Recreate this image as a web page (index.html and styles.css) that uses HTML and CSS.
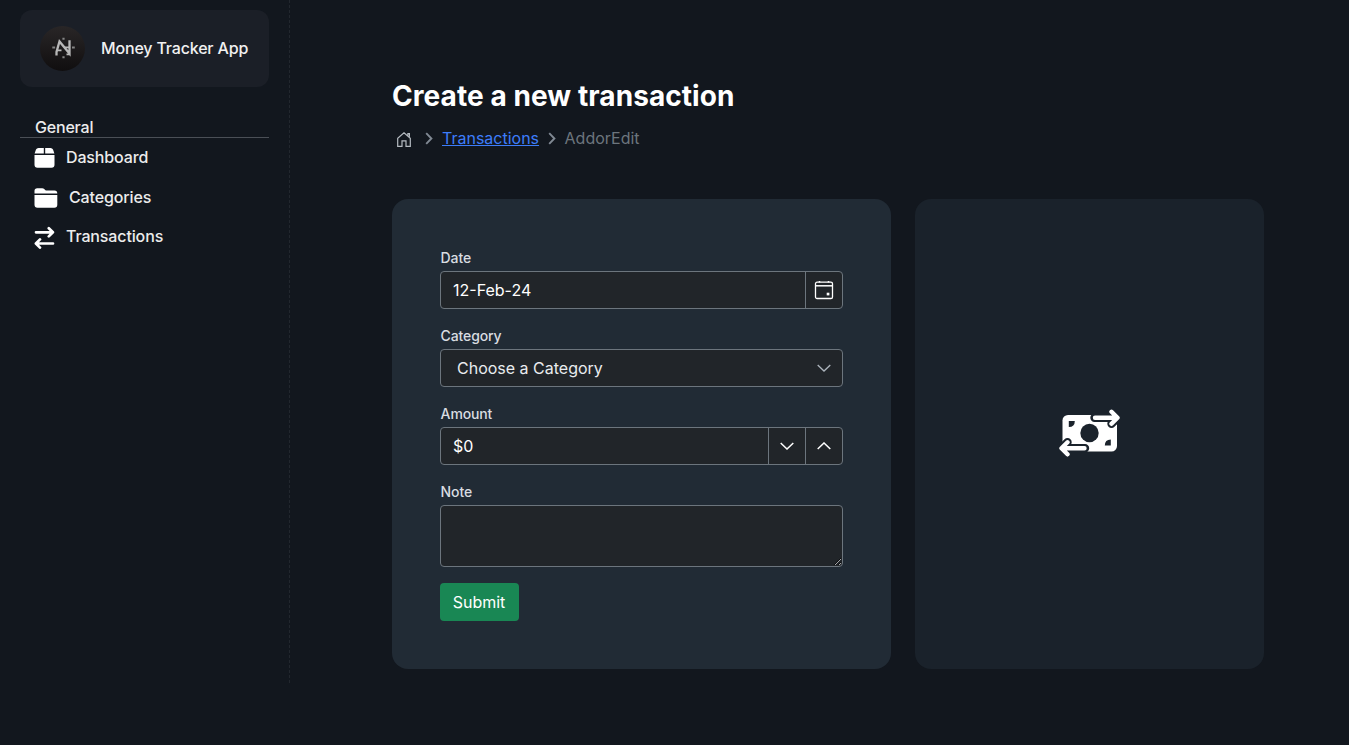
FILE: index.html
```html
<!DOCTYPE html>
<html lang="en">
<head>
<meta charset="utf-8">
<title>Money Tracker App</title>
<link rel="stylesheet" href="styles.css">
</head>
<body>
<div class="app">
  <aside class="sidebar">
    <div class="brand">
      <svg class="brand-logo" width="45" height="45" viewBox="0 0 45 45">
        <defs><linearGradient id="disc" x1="0" y1="0" x2="0" y2="1"><stop offset="0" stop-color="#292627"/><stop offset="1" stop-color="#100e0f"/></linearGradient></defs>
        <circle cx="22.5" cy="22.5" r="22.5" fill="url(#disc)"/>
        <g fill="none" stroke="#b8b8b8" stroke-width="2.3">
          <path d="M16.5 29.6V26l3-10.5 10 12V14.3"/>
          <path d="M17 24.3h4.5M24 21.3h5.5M26.5 28.3h3.3" stroke-width="1.8"/>
          <path d="M12.3 21.5h2.8M32 21.5h2.8M22.4 12.7h2.2M22.4 31.3h2.2" stroke="#858585" stroke-width="2"/>
        </g>
      </svg>
      <span class="brand-name">Money Tracker App</span>
    </div>
    <div class="nav-title">General</div>
    <nav class="nav">
      <a class="nav-item"><svg width="21" height="20" viewBox="0 0 21 20" fill="#fff"><path d="M4.5 0H9.8V5.6H.6L2 1.6Q2.7 0 4.5 0zM11.2 0h5.3q1.8 0 2.5 1.6l1.4 4H11.2zM.5 7h20v9.8q0 3-3 3h-14q-3 0-3-3z"/></svg><span>Dashboard</span></a>
      <a class="nav-item nav-wide"><svg width="24" height="20" viewBox="0 0 24 20" fill="#fff"><path d="M.5 5.4V2.8Q.5.2 3.2.2h5q1.2 0 2 .8l1 .9q.6.5 1.5.5h7.8q2.8 0 2.8 3zM.5 7h22.8v9.8q0 3-3 3H3.5q-3 0-3-3z"/></svg><span>Categories</span></a>
      <a class="nav-item nav-last"><svg width="21" height="24" viewBox="0 0 21 24" fill="none" stroke="#fff" stroke-width="2.7" stroke-linecap="round" stroke-linejoin="round"><path d="M2 7.3h16.8M14.8 3.2l4.1 4.1-4.1 4.1M19 18.5H2M6 14.4l-4.1 4.1L6 22.6"/></svg><span>Transactions</span></a>
    </nav>
  </aside>
  <main class="main">
    <h1 class="title">Create a new transaction</h1>
    <div class="crumbs">
      <svg class="home" width="14" height="15" viewBox="0 0 14 15" fill="none" stroke="#b5bbc1" stroke-width="1.2"><path d="M.7 14.3V6.2L7 .9l6.3 5.3v8.1H9V8.9H5v5.4zM10.9 3.6V1.6h1.5v3.2"/></svg>
      <svg class="sep" width="8" height="13" viewBox="0 0 8 13"><path d="M1.2 1.2l5.2 5.3-5.2 5.3"/></svg>
      <a class="crumb-link">Transactions</a>
      <svg class="sep" width="8" height="13" viewBox="0 0 8 13"><path d="M1.2 1.2l5.2 5.3-5.2 5.3"/></svg>
      <span class="crumb-current">AddorEdit</span>
    </div>
    <div class="panels">
      <section class="card form-card">
        <div class="field">
          <div class="label">Date</div>
          <div class="control"><div class="value">12-Feb-24</div>
            <div class="control-btn"><svg width="20" height="20" viewBox="0 0 20 20" fill="none" stroke="#fff" stroke-width="1.3"><rect x="1.5" y="2.2" width="17" height="16.3" rx="1.6"/><path d="M2 5.8h16" stroke-width="1.6"/><path d="M5.5 .9v1.5M14.5 .9v1.5"/><rect x="12.7" y="12.7" width="2.7" height="2.7" fill="#fff" stroke="none"/></svg></div>
          </div>
        </div>
        <div class="field">
          <div class="label">Category</div>
          <div class="control"><div class="value value-select">Choose a Category</div>
            <div class="select-arrow"><svg width="14" height="8" viewBox="0 0 14 8"><path d="M.7 1L7 7l6.3-6"/></svg></div>
          </div>
        </div>
        <div class="field">
          <div class="label">Amount</div>
          <div class="control"><div class="value">$0</div>
            <div class="control-btn"><svg width="14" height="8" viewBox="0 0 14 8"><path d="M.7 1L7 7l6.3-6"/></svg></div>
            <div class="control-btn"><svg width="14" height="8" viewBox="0 0 14 8"><path d="M.7 7L7 1l6.3 6"/></svg></div>
          </div>
        </div>
        <div class="field">
          <div class="label">Note</div>
          <textarea class="note"></textarea>
        </div>
        <button class="submit">Submit</button>
      </section>
      <section class="card art-card">
        <svg width="62" height="50" viewBox="0 0 62 50">
          <rect x="3.5" y="6" width="54.5" height="36.5" rx="5.5" fill="#fff"/>
          <g fill="#1b232c">
            <circle cx="30.5" cy="24" r="9.2"/>
            <path d="M9.8 12h6q0 6-6 6zM51.8 36.5h-6q0-6 6-6z"/>
          </g>
          <g fill="none" stroke-linecap="round" stroke-linejoin="round">
            <path d="M35.5 8.8H58M52.5 2.8l6 6-6 6M26 39.3H3M8.5 33.3l-6 6 6 6" stroke="#1b232c" stroke-width="8.4"/>
            <path d="M36 8.8H58M52.5 2.8l6 6-6 6M25.5 39.3H3M8.5 33.3l-6 6 6 6" stroke="#fff" stroke-width="4.4"/>
          </g>
        </svg>
      </section>
    </div>
  </main>
</div>
</body>
</html>
```
FILE: styles.css
```css
* { box-sizing: border-box; }
body {
  margin: 0;
  height: 745px;
  overflow: hidden;
  background: #12171e;
  color: #fff;
  font: 16px/24px Inter, sans-serif;
}
svg { display: block; flex: none; }
.app { display: flex; align-items: flex-start; }
.sidebar {
  width: 290px;
  height: 685px;
  padding: 10px 21px 10px 20px;
  background: repeating-linear-gradient(#22272e 0 3px, transparent 3px 5px) right top / 1px 100% no-repeat;
}
.brand {
  display: flex;
  align-items: center;
  gap: 16px;
  height: 77px;
  padding-left: 20px;
  border-radius: 12px;
  background: #1b1f27;
  color: #f1f1f1;
}
.brand-name, .nav-title, .nav-item { font-weight: 500; }
.brand-name { margin-bottom: 2px; white-space: nowrap; letter-spacing: -.17px; }
.nav-title {
  height: 23px;
  margin-top: 28px;
  padding-left: 15px;
  border-bottom: 1px solid #4a4f56;
  color: #ececec;
  letter-spacing: -.2px;
}
.nav { padding-left: 14px; }
.nav-item {
  display: flex;
  align-items: center;
  gap: 11px;
  height: 39px;
  color: #ececec;
  letter-spacing: -.13px;
}
.nav-item span { margin-bottom: 2px; }
.nav-wide { height: 41px; }
.nav-last { height: 37px; }
.main { padding: 78px 0 0 102px; }
.title { margin: 0; font-size: 28px; line-height: 36px; font-weight: 700; letter-spacing: .07px; }
.crumbs { display: flex; align-items: center; height: 24px; margin-top: 12px; padding-left: 5px; }
.home { margin: 3px 14px 0 0; }
.sep { margin-right: 9px; fill: none; stroke: #808993; stroke-width: 1.9; }
.crumb-link { margin-right: 8.5px; color: #3d7dfa; text-decoration: underline; }
.crumb-current { color: #6c757d; }
.panels { display: flex; gap: 24px; margin-top: 49px; }
.card { height: 470px; border-radius: 16px; }
.form-card { width: 499px; padding: 48px; background: #212b35; }
.art-card { display: flex; width: 349px; align-items: center; justify-content: center; background: #1a222b; }
.field { margin-bottom: 16px; }
.label { height: 24px; padding-left: .6px; line-height: 22px; font-size: 14px; font-weight: 500; letter-spacing: -.13px; color: #d9dde1; }
.control {
  display: flex;
  width: 403px;
  height: 38px;
  border: 1px solid #6c757d;
  border-radius: 4px;
  background: #212529;
}
.value { flex: 1; padding: 6px 12px; }
.value-select { padding-left: 16px; color: #e9ecef; }
.control-btn { display: flex; width: 37px; align-items: center; justify-content: center; border-left: 1px solid #6c757d; }
.control-btn path { fill: none; stroke: #fff; stroke-width: 1.5; }
.select-arrow { display: flex; width: 37px; align-items: center; justify-content: center; }
.select-arrow path { fill: none; stroke: #adb5bd; stroke-width: 1.3; }
.note {
  display: block;
  width: 403px;
  height: 62px;
  border: 1px solid #6c757d;
  border-radius: 4px;
  background: #212529;
  color: #fff;
}
.submit {
  display: block;
  width: 79px;
  height: 38px;
  padding: 0 1px 0 0;
  border: 0;
  border-radius: 4px;
  background: #198754;
  color: #fff;
  font: 16px/24px Inter, sans-serif;
}
```
